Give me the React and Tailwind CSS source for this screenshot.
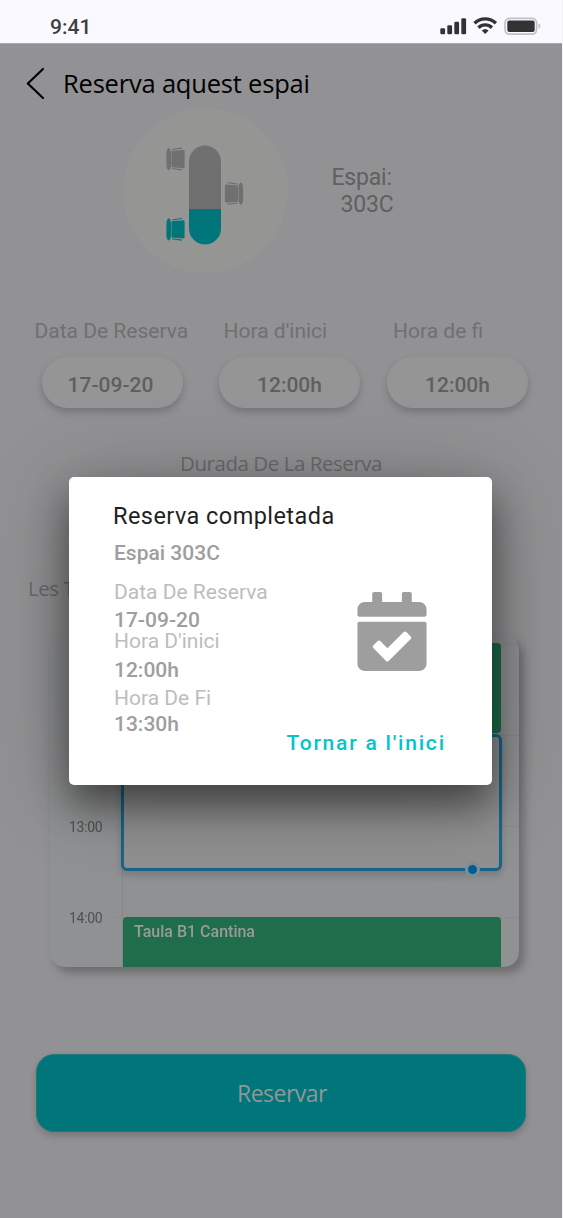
import { FaCalendarCheck } from "react-icons/fa";

function StatusBar() {
  return (
    <header className="flex h-[43px] w-full items-center justify-between bg-[#faf9ff] pt-[10px] pr-[21px] pl-[50px] text-[#3f3f3f]">
      <span className="text-[21px] leading-[34px] font-medium">9:41</span>
      <div className="flex items-center">
        <svg width="101" height="20" viewBox="0 0 101 20" fill="#333">
          <rect x="0.3" y="11.2" width="4.8" height="6" rx="1.2" />
          <rect x="7.3" y="8.2" width="4.8" height="9" rx="1.2" />
          <rect x="14.3" y="4.7" width="4.8" height="12.5" rx="1.2" />
          <rect x="21.3" y="1.2" width="4.8" height="16" rx="1.2" />
          <g fill="none" stroke="#333" strokeWidth="3.4">
            <path d="M34.5 6.3a15.2 15.2 0 0 1 21.4 0" />
            <path d="M38.5 10.7a9.4 9.4 0 0 1 13.4 0" />
          </g>
          <path d="M45.2 16.9l-3.4-3.3a5 5 0 0 1 6.8 0z" />
          <rect x="65" y="1.3" width="31.6" height="15.8" rx="4.5" fill="none" stroke="#c2c1c6" strokeWidth="1.7" />
          <rect x="67.3" y="3.6" width="27.4" height="11.4" rx="2" />
          <path d="M98.5 6.4q2 .8 2 2.7t-2 2.7z" fill="#c2c1c6" />
        </svg>
      </div>
    </header>
  );
}

function Chair({ x, y, color, flip }) {
  return (
    <g transform={flip ? `translate(${x + 19} ${y}) scale(-1 1)` : `translate(${x} ${y})`} fill={color}>
      <rect x="0.4" y="0.4" width="4.6" height="22.4" rx="2.3" ry="6" />
      <path d="M6.3 3.2l11-.8q1.3 0 1.3 1v16.4q0 1-1.3 1l-11-.8q-.8 0-.8-1v-14.8q0-1 .8-1z" />
      <path d="M6 2.2l10-1.5M6 20.9l10 1.5" stroke={color} strokeWidth="1.2" />
      <path d="M5.5 3l11-1M5.5 20.1l11 1" stroke="#959594" strokeWidth="0.5" />
    </g>
  );
}

function SpaceMap() {
  return (
    <div className="flex h-[165px] w-[165px] items-center justify-center rounded-full bg-[#959594]">
      <svg width="165" height="165" viewBox="123 108 165 165">
        <path d="M189 209v-47.5a16 16 0 0 1 32 0v47.5z" fill="#707070" />
        <path d="M189 209v19.5a16 16 0 0 0 32 0v-19.5z" fill="#00757a" />
        <Chair x={166} y={147.5} color="#707070" />
        <Chair x={166} y={217.8} color="#00757a" />
        <Chair x={224.5} y={182} color="#707070" flip />
      </svg>
    </div>
  );
}

function Pill({ children }) {
  return (
    <div className="flex h-[51px] w-[141px] items-center justify-center rounded-full bg-[#959595] pt-1 text-[21px] leading-[30px] font-medium text-[#5f5f5f] shadow-[0_4px_7px_rgba(60,55,75,0.32)]">
      {children}
    </div>
  );
}

function HourLine({ top }) {
  return <div className={`absolute right-0 left-[64px] h-px bg-[#8a8a8c] ${top}`} />;
}

function Calendar() {
  return (
    <section className="relative ml-[50px] flex h-[332px] w-[469px] overflow-hidden rounded-[15px] bg-[#909192] font-medium">
      <HourLine top="top-[9px]" />
      <HourLine top="top-[100px]" />
      <HourLine top="top-[191px]" />
      <HourLine top="top-[282px]" />
      <div className="flex w-[73px] shrink-0 flex-col border-r border-[#868688] pt-[182px] pl-[19px] text-[14px] leading-5 font-normal tracking-[-0.3px] text-[#505050]">
        <span>13:00</span>
        <span className="mt-[71px]">14:00</span>
      </div>
      <div className="z-10 flex w-[381px] shrink-0 flex-col pt-2">
        <div className="h-[90px] w-[378px] rounded-[4px] bg-[#1f6d4a]" />
        <div className="relative mt-[1px] -ml-[2px] h-[138px] w-[381px] rounded-[6px] border-[3px] border-[#19658a] bg-[#909090] shadow-[0_4px_7px_rgba(0,0,0,0.16)]">
          <div className="absolute right-[19px] -bottom-[9px] h-[15px] w-[15px] rounded-full border-[3px] border-[#7b8f9a] bg-[#005f8f]" />
        </div>
        <div className="mt-[46px] h-[50px] w-[378px] rounded-t-[4px] bg-[#1f6d4a] pt-[5px] pl-[11px] text-[16px] leading-5 font-medium text-[#979c99]">
          Taula B1 Cantina
        </div>
      </div>
    </section>
  );
}

function Dialog() {
  return (
    <div className="absolute top-[477px] left-[69px] z-20 flex h-[308px] w-[423px] flex-col rounded-[5px] bg-white pt-[24px] pl-[45px] shadow-[0_20px_38px_rgba(0,0,0,0.46),0_10px_88px_rgba(0,0,0,0.24)]">
      <h2 className="-ml-[1px] text-[23.5px] leading-[30px] tracking-[0.44px] text-[#1f1f1f]">Reserva completada</h2>
      <div className="flex">
        <div className="flex w-[243px] flex-col text-[21px] leading-[28px] text-[#bdbdbd]">
          <strong className="mt-[8px] font-medium text-[#9e9e9e]">Espai 303C</strong>
          <span className="mt-[11px]">Data De Reserva</span>
          <strong className="font-medium text-[#9e9e9e]">17-09-20</strong>
          <span className="-mt-[7px]">Hora D'inici</span>
          <strong className="mt-[1px] font-medium text-[#9e9e9e]">12:00h</strong>
          <span>Hora De Fi</span>
          <strong className="-mt-[2px] font-medium text-[#9e9e9e]">13:30h</strong>
        </div>
        <FaCalendarCheck className="mt-[61px] h-[79px] w-[70px] text-[#9e9e9e]" />
      </div>
      <button className="-mt-[9px] ml-[172.5px] self-start text-[21px] leading-[28px] font-medium tracking-[1.8px] whitespace-nowrap text-[#03c4cd]">
        Tornar a l'inici
      </button>
    </div>
  );
}

export default function App() {
  return (
    <div className="h-[1218px] w-[563px] overflow-hidden bg-[#f3f3f5] font-['Roboto',sans-serif]">
      <div className="relative flex h-[1218px] w-[562px] flex-col overflow-hidden bg-[#929294]">
        <StatusBar />
        <div className="flex h-[65px] items-start border-t border-[#a9a9ac] pt-[23px] pl-[26px]">
          <svg width="20" height="34" viewBox="0 0 20 34" fill="none" stroke="#000" strokeWidth="2.2" strokeLinecap="round" strokeLinejoin="round">
            <path d="M17 2L1.8 16.5L17 31" />
          </svg>
          <h1 className="-mt-px ml-[17px] font-['Open_Sans','Noto_Sans',sans-serif] text-[25.5px] leading-[34px] tracking-[-0.2px] whitespace-nowrap text-black">
            Reserva aquest espai
          </h1>
        </div>

        <div className="flex pl-[123px]">
          <SpaceMap />
          <div className="mt-[56px] ml-[43.5px] text-[23px] leading-[27px] tracking-[-0.2px] text-[#606060]">
            <div>Espai:</div>
            <div className="ml-[9px]">303C</div>
          </div>
        </div>

        <div className="mt-[43px] flex h-[30px] pl-[34.5px] text-[21px] leading-[30px] whitespace-nowrap text-[#707070]">
          <span className="w-[189px]">Data De Reserva</span>
          <span className="w-[169.5px]">Hora d'inici</span>
          <span>Hora de fi</span>
        </div>
        <div className="mt-[11px] flex pl-[42px]">
          <Pill><span className="mr-1">17-09-20</span></Pill>
          <div className="mr-[27px] ml-[36px]">
            <Pill>12:00h</Pill>
          </div>
          <Pill>12:00h</Pill>
        </div>

        <div className="mt-[40px] pl-[180px] font-['Open_Sans','Noto_Sans',sans-serif] text-[20.5px] leading-[30px] tracking-[-0.45px] whitespace-nowrap text-[#6a6a6b]">
          Durada De La Reserva
        </div>
        <div className="mt-[95px] pl-[28px] font-['Open_Sans','Noto_Sans',sans-serif] text-[20.5px] leading-[30px] tracking-[-0.45px] text-[#6a6a6b]">Les Teves</div>

        <div className="mt-[32px] drop-shadow-[5px_6px_4px_rgba(0,0,0,0.25)]">
          <Calendar />
        </div>

        <button className="mt-[87px] ml-[36px] h-[78px] w-[490px] rounded-[18px] border border-[#23777b] bg-[#00757a] pl-[2px] font-['Open_Sans','Noto_Sans',sans-serif] text-[23px] leading-[34px] tracking-[-0.5px] text-[#949696] shadow-[0_4px_6px_rgba(60,55,75,0.3)]">
          Reservar
        </button>

        <Dialog />
      </div>
    </div>
  );
}
